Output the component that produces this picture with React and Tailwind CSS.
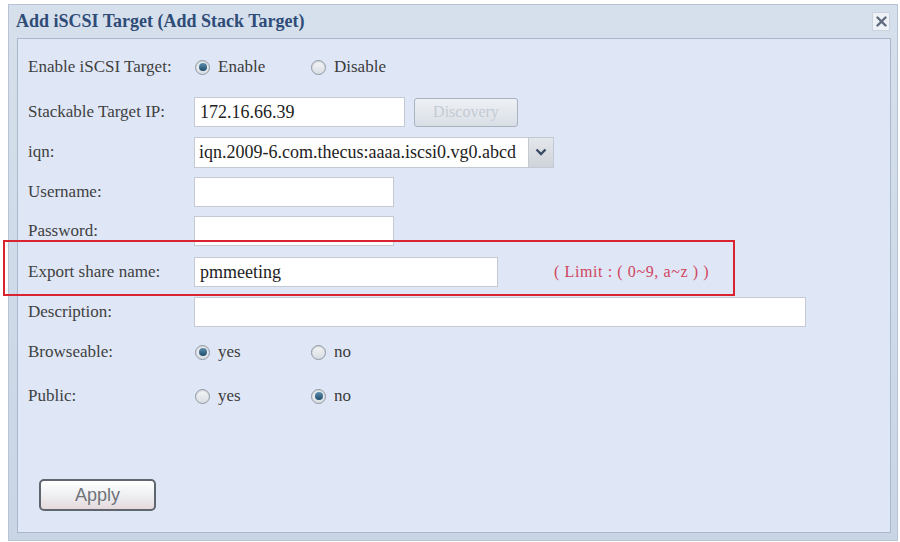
import React from "react";

const serif = "font-['Liberation_Serif','Times_New_Roman',serif]";

function Radio({ checked }) {
  return (
    <span className="flex h-[15px] w-[15px] items-center justify-center rounded-full border border-[#8e98a4] bg-gradient-to-b from-[#f4f5f7] to-[#d9dde2] shadow-[inset_0_1px_1px_rgba(0,0,0,0.15)]">
      {checked && (
        <span className="h-[8px] w-[8px] rounded-full bg-gradient-to-b from-[#5d8fb0] to-[#1d4d6a]" />
      )}
    </span>
  );
}

function RadioPair({ a, b, first }) {
  return (
    <div className="flex items-center">
      <div className="flex w-[117px] items-center gap-[8px] pl-[1px]">
        <Radio checked={first} />
        <span className="text-[17px] text-[#3b3b3b]">{a}</span>
      </div>
      <div className="flex items-center gap-[8px]">
        <Radio checked={!first} />
        <span className="text-[17px] text-[#3b3b3b]">{b}</span>
      </div>
    </div>
  );
}

function Row({ label, children, className }) {
  return (
    <div className={"flex h-[32px] items-center " + (className || "")}>
      <div className="w-[166px] text-[17px] text-[#404040]">{label}</div>
      {children}
    </div>
  );
}

function Field({ w, value }) {
  return (
    <div
      className="flex h-[30px] items-center border border-[#c3cad4] bg-white px-[5px] text-[18px] text-[#222]"
      style={{ width: w }}
    >
      {value}
    </div>
  );
}

export default function App() {
  return (
    <div className={"relative h-[542px] w-[900px] bg-white pl-[8px] pt-[4px] " + serif}>
      <div className="flex h-[537px] w-[890px] flex-col border border-[#b7c4d6] bg-gradient-to-b from-[#d6e0ec] to-[#c9d5e5]">
        <div className="flex h-[33px] items-center justify-between pl-[7px] pr-[7px]">
          <span className="text-[18px] font-bold text-[#2f4c78]">Add iSCSI Target (Add Stack Target)</span>
          <span className="flex h-[19px] w-[18px] items-center justify-center border border-[#c9d2de] bg-[#eef2f7]">
            <svg width="11" height="11" viewBox="0 0 11 11">
              <path d="M1.5 1.5 L9.5 9.5 M9.5 1.5 L1.5 9.5" stroke="#5f6b7d" strokeWidth="2.4" strokeLinecap="round" />
            </svg>
          </span>
        </div>
        <div className="mb-[7px] ml-[8px] mr-[6px] flex flex-1 flex-col border border-[#a9b8cd] bg-[#dfe7f7] pl-[10px] pt-[12px]">
          <Row label="Enable iSCSI Target:">
            <RadioPair a="Enable" b="Disable" first />
          </Row>
          <Row label="Stackable Target IP:" className="mt-[13px]">
            <Field w="211px" value="172.16.66.39" />
            <div className="ml-[9px] flex h-[29px] w-[104px] items-center justify-center rounded-[3px] border border-[#a9b2bf] bg-gradient-to-b from-[#eef1f5] to-[#d9dee6] text-[16px] text-[#c4cad3]">
              Discovery
            </div>
          </Row>
          <Row label="iqn:" className="mt-[8px]">
            <div className="flex h-[31px] w-[360px] items-stretch border border-[#c3cad4] bg-white">
              <div className="flex flex-1 items-center overflow-hidden whitespace-nowrap pl-[4px] text-[18px] text-[#222]">
                iqn.2009-6.com.thecus:aaaa.iscsi0.vg0.abcd
              </div>
              <div className="flex w-[25px] items-center justify-center border-l border-[#c3cad4] bg-gradient-to-b from-[#e4e7eb] to-[#cfd4da]">
                <svg width="12" height="8" viewBox="0 0 12 8">
                  <path d="M1.5 1.5 L6 6 L10.5 1.5" fill="none" stroke="#3d4a66" strokeWidth="2.4" />
                </svg>
              </div>
            </div>
          </Row>
          <Row label="Username:" className="mt-[8px]">
            <Field w="200px" value="" />
          </Row>
          <Row label="Password:" className="mt-[7px]">
            <Field w="200px" value="" />
          </Row>
          <Row label="Export share name:" className="mt-[9px]">
            <Field w="304px" value="pmmeeting" />
            <span className="ml-[56px] text-[16px] tracking-[0.6px] text-[#d1455e]">( Limit : ( 0~9, a~z ) )</span>
          </Row>
          <Row label="Description:" className="mt-[8px]">
            <Field w="612px" value="" />
          </Row>
          <Row label="Browseable:" className="mt-[8px]">
            <RadioPair a="yes" b="no" first />
          </Row>
          <Row label="Public:" className="mt-[12px]">
            <RadioPair a="yes" b="no" first={false} />
          </Row>
          <div className="ml-[11px] mt-[67px]">
            <button className="flex h-[32px] w-[117px] items-center justify-center rounded-[5px] border-2 border-[#60666e] bg-gradient-to-b from-[#ffffff] via-[#eef0f2] to-[#e6d9dd] font-['Liberation_Sans',Arial,sans-serif] text-[18px] text-[#6f7378]">
              Apply
            </button>
          </div>
        </div>
      </div>
      <div className="absolute left-[3px] top-[240px] h-[56px] w-[732px] border-2 border-[#d9232e]" />
    </div>
  );
}
